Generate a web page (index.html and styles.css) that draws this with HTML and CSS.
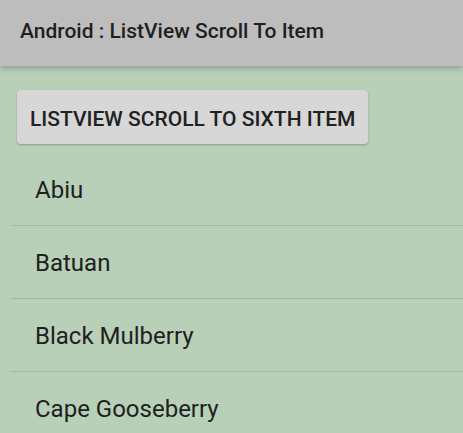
FILE: index.html
```html
<!DOCTYPE html>
<html lang="en">
<head>
  <meta charset="UTF-8" />
  <meta name="viewport" content="width=device-width, initial-scale=1" />
  <title>ListView Scroll To Item</title>
  <link rel="stylesheet" href="styles.css">
</head>
<body>

  <header class="toolbar">
    <h1>Android : ListView Scroll To Item</h1>
  </header>

  <main class="content">
    <button class="btn">ListView Scroll To Sixth Item</button>

    <ul class="fruit-list">
      <li>Abiu</li>
      <li>Batuan</li>
      <li>Black Mulberry</li>
      <li>Cape Gooseberry</li>
    </ul>
  </main>

</body>
</html>
```

FILE: styles.css
```css
:root {
  --bar: #bdbdbd;
  --bg: #b7d0b7;
  --btn: #d6d7d6;
  --divider: #9fb89f;
  --text: #1e211e;
}

html, body {
  height: 100%;
}

body {
  margin: 0;
  font-family: Roboto, "Noto Sans", sans-serif;
  background: var(--bg);
  color: var(--text);
  overflow: hidden;
}

.toolbar {
  position: relative;
  z-index: 2;
  height: 66px;
  display: flex;
  align-items: center;
  padding: 0 20px;
  background: var(--bar);
  box-shadow: 0 2px 6px rgba(0, 0, 0, 0.25);
}

.toolbar h1 {
  margin: 0 0 4px;
  font-size: 21px;
  font-weight: 500;
  color: #1f1f1f;
}

.content {
  padding: 24px 0 0 11px;
}

.btn {
  display: block;
  margin-left: 6px;
  height: 54px;
  padding: 3px 13px 0;
  background: var(--btn);
  color: #212121;
  border: none;
  border-radius: 4px;
  box-shadow: 0 1px 2px rgba(0, 0, 0, 0.25);
  font-family: inherit;
  font-size: 21px;
  font-weight: 500;
  text-transform: uppercase;
}

.fruit-list {
  list-style: none;
  margin: 9px 0 0;
  padding: 0;
}

.fruit-list li {
  height: 72px;
  display: flex;
  align-items: center;
  padding: 2px 0 0 24px;
  box-sizing: border-box;
  height: 73px;
  font-size: 24px;
  border-bottom: 1px solid var(--divider);
}
```
